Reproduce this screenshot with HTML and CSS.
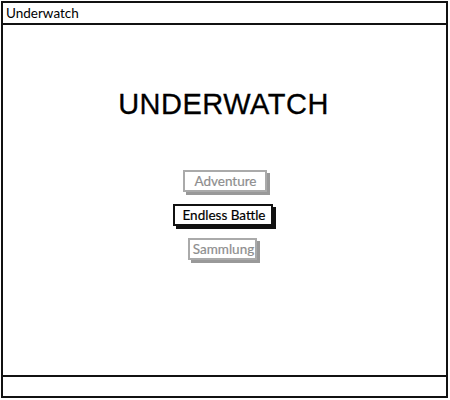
FILE: index.html
```html
<!DOCTYPE html>
<html>
<head>
<meta charset="utf-8">
<link rel="stylesheet" href="styles.css">
</head>
<body>
<div class="frame">
  <div class="titlebar">Underwatch</div>
  <div class="main">
    <h1 class="heading">UNDERWATCH</h1>
    <div class="menu">
      <div class="btn btn-disabled btn-adventure">Adventure</div>
      <div class="btn btn-active">Endless Battle</div>
      <div class="btn btn-disabled btn-sammlung">Sammlung</div>
    </div>
  </div>
  <div class="footer"></div>
</div>
</body>
</html>
```

FILE: styles.css
```css
html, body {
  margin: 0;
  padding: 0;
  background: #fff;
}
body {
  padding: 1px 0 0 1px;
  font-family: "Liberation Sans", Arial, sans-serif;
  color: #000;
}
.frame {
  box-sizing: border-box;
  width: 447px;
  height: 397px;
  border: 2px solid #111;
  display: flex;
  flex-direction: column;
}
.titlebar {
  height: 20px;
  line-height: 20px;
  font-family: Lato, "Liberation Sans", sans-serif;
  font-size: 13.5px;
  padding-left: 3px;
  border-bottom: 2px solid #111;
}
.main {
  flex: 1;
  display: flex;
  flex-direction: column;
  align-items: center;
  padding-top: 63px;
}
.heading {
  margin: 0;
  font-weight: normal;
  font-size: 29px;
  line-height: 32px;
  letter-spacing: 0.5px;
  -webkit-text-stroke: 0.3px #000;
  margin-left: -2px;
}
.menu {
  margin-top: 50px;
  display: flex;
  flex-direction: column;
  align-items: center;
  gap: 12px;
}
.btn {
  font-family: Lato, "Liberation Sans", sans-serif;
  font-size: 13.5px;
  line-height: 18px;
  padding: 0 7px;
  border: 2px solid #111;
  background: #fff;
  box-shadow: 3px 3px 0 #111;
  -webkit-text-stroke: 0.2px currentColor;
}
.btn-active {
  padding: 0 6px 0 8px;
  margin-left: -3px;
}
.btn-disabled {
  color: #8e8e8e;
  border-color: #aaa;
  box-shadow: 3px 3px 0 #999;
}
.btn-adventure {
  padding: 0 8px 0 9px;
  margin-left: 1px;
}
.btn-sammlung {
  padding: 0 1px 0 3px;
  margin-left: -4px;
}
.footer {
  height: 19px;
  border-top: 2px solid #111;
}
```
